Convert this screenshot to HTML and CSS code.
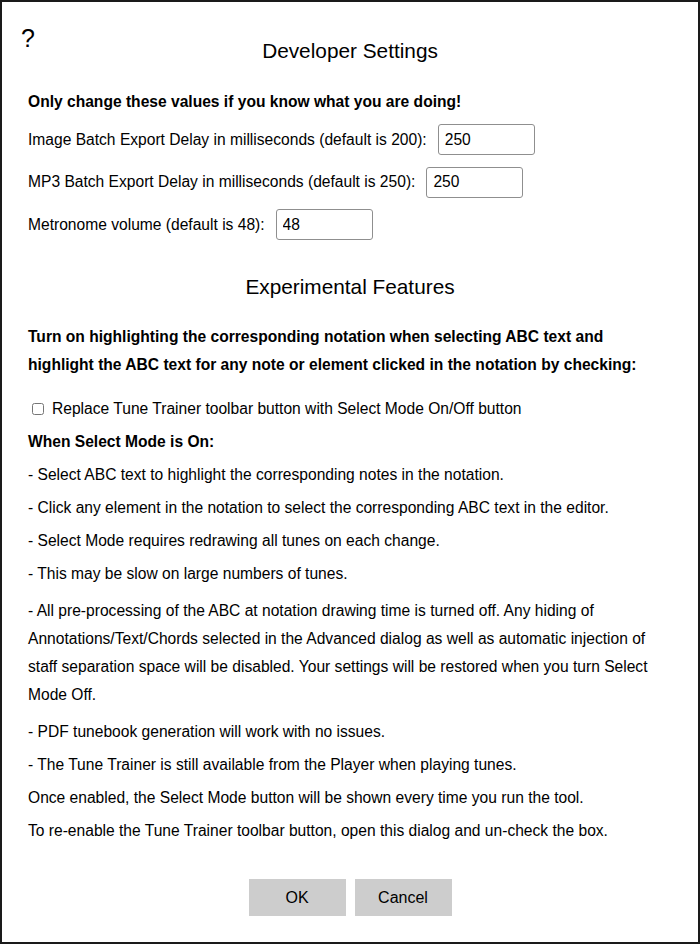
FILE: index.html
```html
<!DOCTYPE html>
<html>
<head>
<meta charset="utf-8">
<link rel="stylesheet" href="styles.css">
</head>
<body>
<div class="dialog">
  <div class="help">?</div>
  <h2 class="title">Developer Settings</h2>
  <p class="bold warn">Only change these values if you know what you are doing!</p>
  <div class="row first">
    <label>Image Batch Export Delay in milliseconds (default is 200):</label>
    <input class="field" type="text" value="250">
  </div>
  <div class="row">
    <label>MP3 Batch Export Delay in milliseconds (default is 250):</label>
    <input class="field" type="text" value="250">
  </div>
  <div class="row">
    <label>Metronome volume (default is 48):</label>
    <input class="field" type="text" value="48">
  </div>
  <h2 class="title title2">Experimental Features</h2>
  <p class="bold intro">Turn on highlighting the corresponding notation when selecting ABC text and highlight the ABC text for any note or element clicked in the notation by checking:</p>
  <div class="check">
    <input type="checkbox" class="cb">
    <span>Replace Tune Trainer toolbar button with Select Mode On/Off button</span>
  </div>
  <p class="bold">When Select Mode is On:</p>
  <p>- Select ABC text to highlight the corresponding notes in the notation.</p>
  <p>- Click any element in the notation to select the corresponding ABC text in the editor.</p>
  <p>- Select Mode requires redrawing all tunes on each change.</p>
  <p>- This may be slow on large numbers of tunes.</p>
  <p class="long">- All pre-processing of the ABC at notation drawing time is turned off. Any hiding of Annotations/Text/Chords selected in the Advanced dialog as well as automatic injection of staff separation space will be disabled. Your settings will be restored when you turn Select Mode Off.</p>
  <p>- PDF tunebook generation will work with no issues.</p>
  <p>- The Tune Trainer is still available from the Player when playing tunes.</p>
  <p>Once enabled, the Select Mode button will be shown every time you run the tool.</p>
  <p>To re-enable the Tune Trainer toolbar button, open this dialog and un-check the box.</p>
  <div class="buttons">
    <button class="btn">OK</button>
    <button class="btn">Cancel</button>
  </div>
</div>
</body>
</html>
```

FILE: styles.css
```css
html, body {
  margin: 0;
  padding: 0;
  background: #fff;
}
body {
  font-family: "Liberation Sans", Arial, sans-serif;
  color: #000;
}
.dialog {
  box-sizing: border-box;
  width: 700px;
  height: 944px;
  border: 2px solid #1a1a1a;
  padding: 0 26px;
  position: relative;
}
.help {
  position: absolute;
  left: 19px;
  top: 22px;
  font-size: 25px;
  line-height: 28px;
}
.title {
  font-weight: normal;
  font-size: 20.8px;
  text-align: center;
  margin: 37px 0 0 0;
  line-height: 24px;
}
.title2 {
  margin-top: 35px;
}
p {
  font-size: 15.6px;
  line-height: 28px;
  margin: 5px 0;
  max-width: 624px;
}
.bold {
  font-weight: bold;
}
.warn {
  margin-top: 25px;
}
.row {
  display: flex;
  align-items: center;
  font-size: 15.6px;
  height: 31px;
  margin-top: 11.5px;
}
.row.first {
  margin-top: 8px;
}
.row label {
  margin-right: 11px;
}
.field {
  box-sizing: border-box;
  width: 97px;
  height: 31px;
  border: 1px solid #8f8f8f;
  border-radius: 3px;
  padding: 0 6px;
  font-family: "Liberation Sans", Arial, sans-serif;
  font-size: 15.6px;
  color: #000;
}
.intro {
  margin-top: 24px;
}
.check {
  display: flex;
  align-items: center;
  font-size: 15.6px;
  margin-top: 16px;
  margin-bottom: 4px;
  height: 28px;
}
.cb {
  margin: 0 8px 0 4px;
  width: 12px;
  height: 12px;
}
.long {
  margin-top: 9px;
  margin-bottom: 9px;
}
.buttons {
  display: flex;
  justify-content: center;
  gap: 9px;
  margin-top: 34px;
}
.btn {
  width: 97px;
  height: 37px;
  border: none;
  background: #cdcdcd;
  font-family: "Liberation Sans", Arial, sans-serif;
  font-size: 16px;
  color: #000;
  padding: 0;
}
```
